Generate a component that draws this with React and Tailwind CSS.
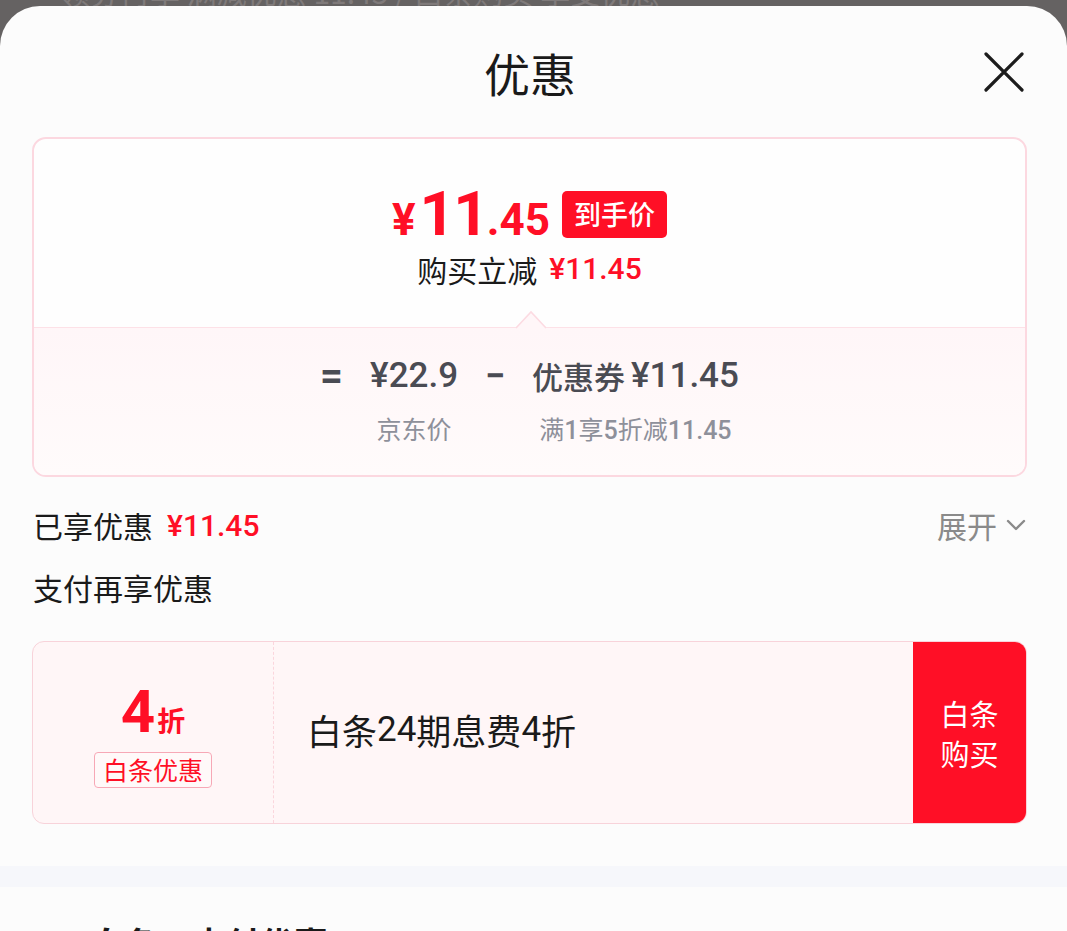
import React from 'react'

const CJK = { fontFamily: '"Noto Sans CJK SC", "Noto Sans", sans-serif' }
const NUM = { fontFamily: 'Roboto, "Noto Sans CJK SC", sans-serif' }

function CloseIcon() {
  return (
    <svg width="42" height="42" viewBox="0 0 42 42" fill="none">
      <path d="M3 3 L39 39 M39 3 L3 39" stroke="#1c1c1c" strokeWidth="3.2" strokeLinecap="round" />
    </svg>
  )
}

function Chevron() {
  return (
    <svg width="22" height="14" viewBox="0 0 22 14" fill="none">
      <path d="M3 3 L11 11 L19 3" stroke="#8a8a8a" strokeWidth="2.4" strokeLinecap="round" strokeLinejoin="round" />
    </svg>
  )
}

function PriceCard() {
  return (
    <div className="ml-[32px] mr-[40px] h-[340px] rounded-[14px] border-2 border-[#fcd8e0] bg-[#fefefe] overflow-hidden flex flex-col">
      <div className="h-[188px] flex flex-col items-center pt-[44px]">
        <div className="flex items-center gap-[12px]">
          <div className="flex items-baseline text-[#ff0f26] font-bold leading-none" style={NUM}>
            <span className="text-[44px] mr-[4px]">¥</span>
            <span className="text-[62px] tracking-[-2px]">11</span>
            <span className="text-[44px]">.45</span>
          </div>
          <div className="h-[47px] px-[12px] rounded-[5px] bg-[#ff0f26] text-white text-[27px] flex items-center font-medium" style={CJK}>
            到手价
          </div>
        </div>
        <div className="mt-[6px] flex items-center gap-[12px] text-[30px] leading-[36px]">
          <span className="text-[#1a1a1a]" style={CJK}>购买立减</span>
          <span className="text-[#ff0f26] font-medium text-[30px]" style={NUM}>¥11.45</span>
        </div>
      </div>
      <div className="relative flex-1 border-t border-[#fde1e7] bg-gradient-to-b from-[#fff6f8] to-[#fffbfb]">
        <svg className="absolute left-[481px] top-[-18px]" width="32" height="19" viewBox="0 0 32 19" fill="none">
          <path d="M0 18.5 L16 1.5 L32 18.5 Z" fill="#fff6f8" />
          <path d="M1 18 L16 2 L31 18" stroke="#fcdbe2" strokeWidth="1.6" />
        </svg>
        <div className="flex justify-center items-start gap-[27px] pt-[29px] text-[#4a4b53]">
          <div className="text-[40px] leading-[38px] font-bold" style={NUM}>=</div>
          <div className="flex flex-col items-center">
            <span className="text-[35px] leading-[38px] font-medium" style={NUM}>¥22.9</span>
            <span className="mt-[17px] text-[25px] leading-[32px] text-[#8e909a]" style={CJK}>京东价</span>
          </div>
          <div className="text-[36px] leading-[38px] font-bold" style={NUM}>−</div>
          <div className="flex flex-col items-center">
            <span className="flex items-center text-[35px] leading-[38px] font-medium">
              <span className="text-[31px]" style={CJK}>优惠券</span>
              <span className="ml-[6px]" style={NUM}>¥11.45</span>
            </span>
            <span className="mt-[17px] text-[25px] leading-[32px] text-[#8e909a]" style={CJK}>
              满<span style={NUM} className="font-medium">1</span>享<span style={NUM} className="font-medium">5</span>折减<span style={NUM} className="font-medium">11.45</span>
            </span>
          </div>
        </div>
      </div>
    </div>
  )
}

function BaitiaoCard() {
  return (
    <div className="ml-[32px] mr-[40px] h-[183px] rounded-[12px] border border-[#f8d3da] bg-[#fff6f7] overflow-hidden flex">
      <div className="w-[241px] border-r border-dashed border-[#fbd6dd] flex flex-col items-center pt-[40px]">
        <div className="flex items-baseline text-[#ff0f26] font-bold leading-none">
          <span className="text-[60px]" style={NUM}>4</span>
          <span className="text-[28px] ml-[2px]" style={CJK}>折</span>
        </div>
        <div className="mt-[10px] h-[36px] px-[8px] rounded-[4px] border border-[#f7a8b6] bg-white/30 text-[#ff0f26] text-[25px] flex items-center" style={CJK}>
          白条优惠
        </div>
      </div>
      <div className="flex-1 flex items-center pl-[33px] pb-[4px] text-[35px] text-[#1a1a1a]" style={CJK}>
        白条<span style={NUM}>24</span>期息费<span style={NUM}>4</span>折
      </div>
      <div className="w-[113px] bg-[#ff0f26] text-white text-[29px] leading-[40px] flex flex-col items-center justify-center" style={CJK}>
        <span>白条</span>
        <span>购买</span>
      </div>
    </div>
  )
}

export default function App() {
  return (
    <div className="w-[1067px] h-[931px] overflow-hidden bg-[#656262]" style={CJK}>
      <div className="h-[6px] overflow-hidden px-[60px]">
        <div className="-mt-[24px] text-[30px] leading-[30px] text-[#7f7a7a] whitespace-nowrap">
          领券再享 满减优惠 11.45 / 白条购买 享受优惠
        </div>
      </div>
      <div className="rounded-t-[40px] bg-[#fcfcfc] h-[925px]">
        <div className="relative h-[131px] flex justify-center pt-[40px] pr-[7px]">
          <div className="text-[46px] leading-[52px] text-[#1a1a1a]">优惠</div>
          <button className="absolute left-[983px] top-[45px]">
            <CloseIcon />
          </button>
        </div>

        <PriceCard />

        <div className="pl-[33px] pr-[40px] mt-[30px] flex items-center justify-between h-[36px]">
          <div className="flex items-center gap-[14px] text-[30px]">
            <span className="text-[#1a1a1a]">已享优惠</span>
            <span className="text-[#ff0f26] font-medium text-[30px]" style={NUM}>¥11.45</span>
          </div>
          <div className="flex items-center gap-[8px] text-[30px] text-[#8a8a8a]">
            <span>展开</span>
            <Chevron />
          </div>
        </div>

        <div className="px-[33px] mt-[26px] h-[36px] flex items-center text-[30px] text-[#1a1a1a]">
          支付再享优惠
        </div>

        <div className="mt-[36px]">
          <BaitiaoCard />
        </div>

        <div className="mt-[42px] h-[21px] bg-[#f6f7fb]" />

        <div className="px-[90px] pt-[36px] text-[34px] leading-[40px] text-[#1a1a1a] font-bold">
          白条·支付优惠
        </div>
      </div>
    </div>
  )
}
